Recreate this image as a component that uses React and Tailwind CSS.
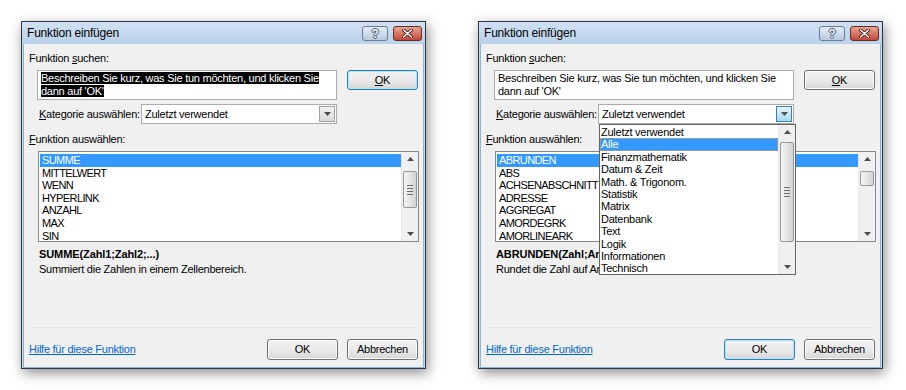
const FONT = "font-['Liberation_Sans',Arial,sans-serif]";

const leftFns = ["SUMME", "MITTELWERT", "WENN", "HYPERLINK", "ANZAHL", "MAX", "SIN"];
const rightFns = ["ABRUNDEN", "ABS", "ACHSENABSCHNITT", "ADRESSE", "AGGREGAT", "AMORDEGRK", "AMORLINEARK"];
const categories = [
  "Zuletzt verwendet", "Alle", "Finanzmathematik", "Datum & Zeit", "Math. & Trigonom.", "Statistik",
  "Matrix", "Datenbank", "Text", "Logik", "Informationen", "Technisch",
];

function Arrow({ up }) {
  return (
    <svg width="7" height="4" viewBox="0 0 7 4">
      <path d={up ? "M0 4 L3.5 0 L7 4 Z" : "M0 0 L7 0 L3.5 4 Z"} fill="#4d4d4d" />
    </svg>
  );
}

function Scrollbar({ thumbTop, thumbHeight }) {
  return (
    <div className="relative w-[17px] h-full bg-[#f0f0f0] border-l border-[#e8e8e8] flex flex-col items-center justify-between py-[5px]">
      <Arrow up />
      <div
        className="absolute left-[1px] right-[1px] rounded-[2px] border border-[#979797] bg-gradient-to-r from-[#f3f3f3] via-[#e6e6e6] to-[#d2d2d2] flex flex-col items-center justify-center gap-[2px]"
        style={{ top: thumbTop, height: thumbHeight }}
      >
        {thumbHeight > 20 && [0, 1, 2, 3].map((i) => <div key={i} className="w-[6px] h-px bg-[#6d6d6d]" />)}
      </div>
      <Arrow />
    </div>
  );
}

function Button({ children, focused, className = "" }) {
  return (
    <div
      className={`h-[21px] w-[71px] rounded-[3px] border flex items-center justify-center text-black bg-gradient-to-b from-[#f2f2f2] via-[#ebebeb] to-[#d6d6d6] ${
        focused ? "border-[#3c7fb1] shadow-[inset_0_0_0_1px_#a6e6fb]" : "border-[#707070] shadow-[inset_0_0_0_1px_#fbfbfb]"
      } ${className}`}
    >
      {children}
    </div>
  );
}

function Dialog({ fns, sig, desc, searchSelected, topOkFocused, open, thumbH }) {
  return (
    <div className={`relative w-[405px] h-[348px] shrink-0 border border-[#2b3744] bg-[#c4d8ee] shadow-[2px_4px_12px_rgba(0,0,0,0.45)] ${FONT} text-[11px] tracking-[-0.25px] text-black whitespace-nowrap`}>
      {/* title bar */}
      <div className="h-[22px] flex items-center justify-between pl-[5px] pr-[3px] bg-gradient-to-b from-[#d0e1f3] to-[#b9d1ea]">
        <span className="text-[12px] tracking-[-0.2px] text-black">Funktion einfügen</span>
        <div className="flex gap-[5px] self-start mt-[4px]">
          <div className="w-[26px] h-[15px] rounded-[3px] border border-[#6b7d90] bg-gradient-to-b from-[#e4edf6] to-[#b8cbe0] flex items-center justify-center text-[12px] leading-none font-bold text-[#eef3f8] [text-shadow:1px_0_0_#4a5d72,-1px_0_0_#4a5d72,0_1px_0_#4a5d72,0_-1px_0_#4a5d72]">?</div>
          <div className="w-[29px] h-[15px] rounded-[3px] border border-[#6c2a20] bg-gradient-to-b from-[#e8a493] to-[#c5463a] flex items-center justify-center">
            <svg width="11" height="9" viewBox="0 0 11 9">
              <path d="M1.5 1 L9.5 8 M9.5 1 L1.5 8" stroke="#3d1a14" strokeWidth="3.2" strokeLinecap="round" />
              <path d="M1.5 1 L9.5 8 M9.5 1 L1.5 8" stroke="#ffffff" strokeWidth="1.6" strokeLinecap="round" />
            </svg>
          </div>
        </div>
      </div>
      {/* body */}
      <div className="mx-[1px] border-x border-b border-[#8fb2d8] h-[324px] bg-[#f0f0f0] relative">
        <div className="px-[5px] pt-[7px]">
          <div className="h-[14px] leading-[14px]">Funktion <u>s</u>uchen:</div>
          <div className="flex mt-[5px] pl-[8px]">
            <div className="w-[300px] h-[30px] bg-white border border-[#a5acb5] px-[3px] pt-[1px] leading-[13px]">
              {searchSelected ? (
                <>
                  <span className="bg-black text-white">Beschreiben Sie kurz, was Sie tun möchten, und klicken Sie</span>
                  <br />
                  <span className="bg-black text-white">dann auf 'OK'</span>
                </>
              ) : (
                <>Beschreiben Sie kurz, was Sie tun möchten, und klicken Sie<br />dann auf 'OK'</>
              )}
            </div>
            <Button focused={topOkFocused} className="ml-[10px] !h-[20px]">
              <u>O</u>K
            </Button>
          </div>
          <div className="flex items-center mt-[4px] pl-[10px]">
            <span className="w-[102px]"><u>K</u>ategorie auswählen:</span>
            <div className="w-[196px] h-[20px] bg-white border border-[#a5acb5] flex items-center justify-between pl-[3px] pr-[1px]">
              <span>Zuletzt verwendet</span>
              <div
                className={`w-[16px] h-[16px] flex items-center justify-center border ${
                  open ? "border-[#3c7fb1] bg-gradient-to-b from-[#e3f4fc] to-[#a9d9f2]" : "border-[#a0a0a0] bg-gradient-to-b from-[#f2f2f2] to-[#d8d8d8]"
                }`}
              >
                <Arrow />
              </div>
            </div>
          </div>
          <div className="h-[14px] leading-[14px] mt-[8px]"><u>F</u>unktion auswählen:</div>
          <div className="ml-[9px] mt-[5px] w-[381px] h-[91px] bg-white border border-[#828790] flex">
            <div className="flex-1 pt-[2px] pl-[1px] tracking-[-0.6px]">
              {fns.map((f, i) => (
                <div key={f} className={`h-[12.6px] leading-[12.6px] pl-[2px] ${i === 0 ? "bg-[#3399ff] text-white" : ""}`}>{f}</div>
              ))}
            </div>
            <Scrollbar thumbTop={19} thumbHeight={thumbH} />
          </div>
          <div className="mt-[5px] pl-[10px]">
            <div className="font-bold text-[11px] tracking-[-0.1px] h-[15px] leading-[15px]">{sig}</div>
            <div className="h-[15px] leading-[15px]">{desc}</div>
          </div>
        </div>
        <div className="absolute left-[7px] right-[7px] top-[283px] h-px bg-[#dfe4ea]" />
        <div className="absolute left-[5px] right-[5px] top-[295px] flex items-center justify-between">
          <span className="text-[#0066cc] underline">Hilfe für diese Funktion</span>
          <div className="flex gap-[9px]">
            <Button focused={!topOkFocused}>OK</Button>
            <Button>Abbrechen</Button>
          </div>
        </div>
        {open && (
          <div className="absolute left-[118px] top-[80px] w-[197px] h-[151px] bg-white border border-[#646464] flex">
            <div className="flex-1 pt-[1px]">
              {categories.map((c, i) => (
                <div
                  key={c}
                  className={`h-[12.4px] leading-[12.4px] pl-[1px] ${i === 1 ? "bg-[#3399ff] text-white outline-1 outline-dotted outline-[#e8a040] -outline-offset-1" : ""}`}
                >
                  {c}
                </div>
              ))}
            </div>
            <Scrollbar thumbTop={17} thumbHeight={100} />
          </div>
        )}
      </div>
    </div>
  );
}

export default function App() {
  return (
    <div className="w-[906px] h-[390px] bg-white flex gap-[52px] pl-[21px] pt-[21px]">
      <Dialog
        fns={leftFns}
        sig="SUMME(Zahl1;Zahl2;...)"
        desc="Summiert die Zahlen in einem Zellenbereich."
        searchSelected
        topOkFocused
        thumbH={37}
      />
      {/* only the part left of the open dropdown is visible in this state */}
      <Dialog
        fns={rightFns}
        sig="ABRUNDEN(Zahl;An"
        desc="Rundet die Zahl auf An"
        open
        thumbH={15}
      />
    </div>
  );
}
